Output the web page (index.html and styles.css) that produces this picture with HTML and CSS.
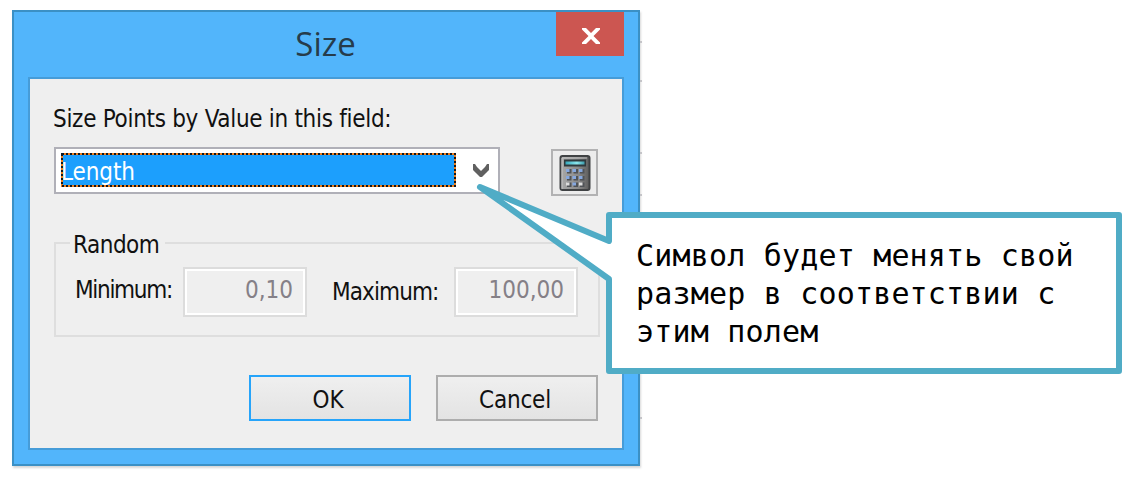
FILE: index.html
```html
<!DOCTYPE html>
<html lang="ru">
<head>
<meta charset="utf-8">
<title>Size</title>
<link rel="stylesheet" href="styles.css">
</head>
<body>
<main class="stage">
  <section class="dialog">
    <header class="titlebar">
      <h1 class="title">Size</h1>
      <button class="close" aria-label="Close">
        <svg width="18" height="16" viewBox="0 0 18 16"><path d="M0 0h4l5 5 5-5h4v1.500L11.500 8l6.500 6.500V16h-4l-5-5-5 5H0v-1.500L6.500 8 0 1.500z" fill="#fff"/></svg>
      </button>
    </header>
    <div class="client">
      <p class="label field-label">Size Points by Value in this field:</p>
      <div class="picker">
        <div class="combo">
          <span class="selected"><span class="value">Length</span>
            <svg class="focus" width="395" height="34"><rect x="1" y="1" width="393" height="32" fill="none" stroke="#ef7e1c" stroke-width="2"/><rect x="1" y="1" width="393" height="32" fill="none" stroke="#101820" stroke-width="2" stroke-dasharray="2 2"/></svg>
          </span>
          <svg class="chevron" width="18" height="16" viewBox="0 0 18 16"><path d="M1 1l2 0 2 3 4 4 4-4 2-3h2v6l-3 3-2 2-2 2H8l-2-2-2-2-3-3z" fill="#606060"/></svg>
        </div>
        <button class="calc" aria-label="Calculator">
          <svg width="32" height="36" viewBox="0 0 32 36">
            <defs>
              <linearGradient id="body" x2="1"><stop stop-color="#aaa"/><stop offset=".6" stop-color="#8a8a8a"/><stop offset="1" stop-color="#5c5c5c"/></linearGradient>
              <linearGradient id="screen" x2="1"><stop stop-color="#36a9bd"/><stop offset=".6" stop-color="#8ce6ed"/><stop offset="1" stop-color="#3d9dad"/></linearGradient>
            </defs>
            <rect x="1.500" y="1" width="29" height="34" rx="2" fill="url(#body)" stroke="#404244" stroke-width="2"/>
            <path d="M3 34V3h25" fill="none" stroke="#c4c4c4"/>
            <rect x="5" y="4.500" width="22" height="7" fill="#30393d"/>
            <rect x="6.500" y="6.500" width="19" height="3" fill="url(#screen)"/>
            <g fill="#505357"><path d="M8 14h4.500v4.500H8zM14.500 14H19v4.500h-4.500zM21 14h4.500v4.500H21zM8 21h4.500v4.500H8zM14.500 21H19v4.500h-4.500zM21 21h4.500v4.500H21zM8 27.500h4.500V32H8zM14.500 27.500H19V32h-4.500zM21 27.500h4.500V32H21z"/></g>
            <g fill="#86a8df"><path d="M7 14h3.500v3H7zM13.500 14H17v3h-3.500zM20 14h3.500v3H20zM7 21h3.500v3H7zM13.500 21H17v3h-3.500zM20 21h3.500v3H20zM13.500 27.500H17v3h-3.500z"/></g>
            <path d="M7 27.500h3.500v3H7zM20 27.500h3.500v3H20z" fill="#ddd"/>
          </svg>
        </button>
      </div>
      <div class="group">
        <div class="legend"><span class="label random">Random</span></div>
        <div class="range">
          <span class="label minimum">Minimum:</span>
          <span class="input"><span class="label min-value">0,10</span></span>
          <span class="label maximum">Maximum:</span>
          <span class="input"><span class="label max-value">100,00</span></span>
        </div>
      </div>
      <div class="actions">
        <button class="button default"><span class="label ok">OK</span></button>
        <button class="button"><span class="label cancel">Cancel</span></button>
      </div>
    </div>
  </section>
  <svg class="ticks" width="2" height="420"><path d="M0 32h2M0 71h2M0 143h2M0 185h2M0 408h2" stroke="#c4c4c8" stroke-width="2"/></svg>
  <aside class="callout">
    <svg class="bubble" width="650" height="196" viewBox="0 0 650 196"><path d="M134 33H644V189H134V97L5 5 134 59z" fill="#fff" stroke="#50acc6" stroke-width="6" stroke-linejoin="round"/></svg>
    <p class="note">Символ будет менять свой<br>размер в соответствии с<br>этим полем</p>
  </aside>
</main>
</body>
</html>
```
FILE: styles.css
```css
* { box-sizing: border-box; }
body { margin: 0; background: #fff; overflow: hidden; }
p, h1 { margin: 0; font-weight: normal; }
button { padding: 0; margin: 0; font: inherit; }
svg { display: block; }
.stage { position: relative; width: 1134px; height: 480px; padding: 10px 0 0 12px; }
.dialog {
  width: 628px; height: 456px; padding: 0 14px 14px;
  background: #52b5fb; border: 2px solid #3b90c5;
  box-shadow: 1px 2px 2px #d8d8d8;
}
.titlebar { display: grid; grid-template-columns: 528px 68px; height: 65px; }
.title {
  padding-left: 67px; text-align: center; color: #263c4b;
  font: 33px/63px "Open Sans", "Noto Sans", sans-serif;
}
.close {
  display: flex; align-items: center; justify-content: center;
  width: 68px; height: 44px; padding: 3px 0 0 2px; border: 0; background: #cc5651;
}
.client {
  width: 596px; height: 373px; padding: 25px 22px 0 24px;
  background: #efefef; border: 2px solid #469cd8;
}
.label {
  white-space: nowrap; color: #111;
  font: 24px/30px "DejaVu Sans Condensed", "Noto Sans", sans-serif;
}
.field-label { margin-left: -1px; letter-spacing: -.3px; }
.picker { display: flex; justify-content: space-between; margin-top: 13px; padding-right: 2px; }
.combo {
  display: flex; align-items: flex-start; width: 446px; height: 47px;
  padding: 4px 4px 4px 5px; border: 2px solid #b0b0b8; background: #fff;
}
.selected { position: relative; width: 395px; height: 34px; background: #1c9ffd; }
.focus { position: absolute; inset: 0; }
.value {
  display: block; color: #fff; letter-spacing: -.1px;
  font: 24px/38px "DejaVu Sans Condensed", "Noto Sans", sans-serif;
}
.chevron { margin: 10px 0 0 16px; }
.calc {
  display: flex; align-items: center; justify-content: center;
  width: 47px; height: 47px; margin-top: 2px; border: 2px solid #b2b2b3; background: #ececec;
}
.group { height: 95px; margin-top: 46px; border: 2px solid #dedede; }
.legend { height: 23px; padding-left: 14px; }
.random {
  display: block; width: 95px; padding-left: 3px; letter-spacing: -.5px;
  position: relative; top: -14px; background: #efefef;
}
.range { display: flex; align-items: flex-start; }
.label.minimum { width: 127px; padding-left: 19px; line-height: 46px; letter-spacing: -1.3px; }
.label.maximum { width: 147px; padding-left: 25px; line-height: 50px; letter-spacing: -.9px; }
.input {
  width: 124px; height: 50px; padding-right: 12px; text-align: right;
  border: 2px solid #dcdcdc; box-shadow: inset 0 0 0 2px #fff;
}
.input .label { color: #858087; line-height: 42px; }
.actions { display: flex; justify-content: flex-end; gap: 25px; margin-top: 38px; padding-right: 2px; }
.button {
  width: 162px; height: 46px; padding: 3px 4px 0 0; border: 2px solid #adadad;
  background: linear-gradient(#efefef, #e3e3e3);
}
.cancel { letter-spacing: -.2px; }
.default { border-color: #26a4fa; }
.ticks { position: absolute; left: 640px; top: 10px; }
.callout { position: absolute; left: 475px; top: 182px; width: 650px; height: 196px; padding: 55px 0 0 161px; }
.bubble { position: absolute; inset: 0; }
.note {
  position: relative; color: #000; white-space: nowrap;
  font: 30px/38px "DejaVu Sans Mono", monospace; letter-spacing: .18px;
}
```
